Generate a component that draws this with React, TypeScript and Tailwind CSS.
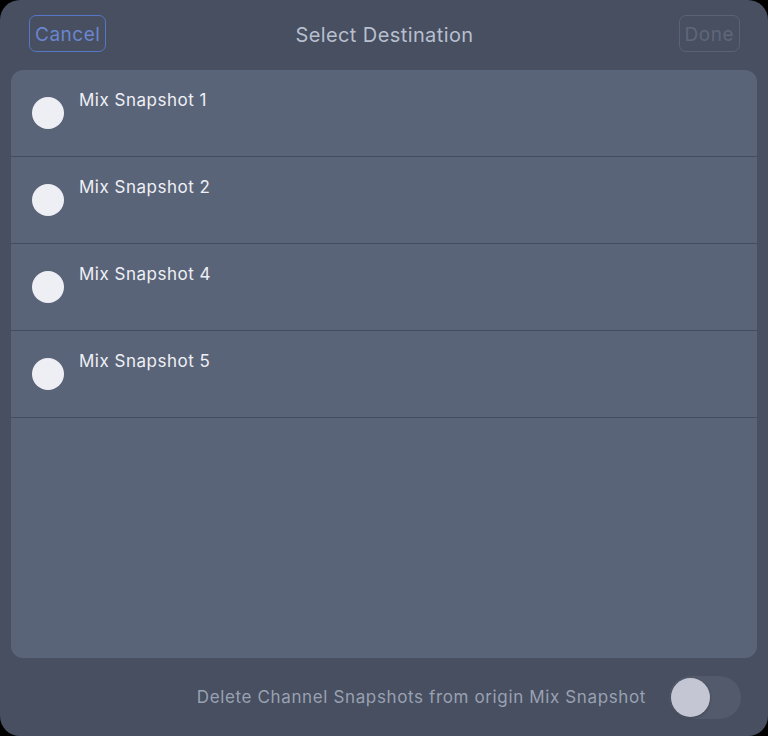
import React from "react";

const items = ["Mix Snapshot 1", "Mix Snapshot 2", "Mix Snapshot 4", "Mix Snapshot 5"];

export default function App() {
  return (
    <div
      className="w-[768px] h-[736px] bg-black"
      style={{ fontFamily: "Inter, 'Noto Sans', 'Liberation Sans', sans-serif" }}
    >
      <div className="w-full h-full rounded-[20px] bg-[#474f60] flex flex-col">
        <div className="h-[70px] grid grid-cols-[1fr_auto_1fr] items-start pt-[15px] pl-[29px] pr-[28px]">
          <div className="flex justify-start">
            <button className="h-[37px] px-[5px] pt-[2px] rounded-[7px] border border-[#5676c9] text-[19px] tracking-[0.5px] leading-none text-[#6a86cf]">
              Cancel
            </button>
          </div>
          <div className="h-[37px] pt-[2px] flex items-center text-[20px] tracking-[0.4px] text-[#b8bfcf]">
            Select Destination
          </div>
          <div className="flex justify-end">
            <button className="h-[37px] px-[5px] pt-[2px] rounded-[7px] border border-[#5a6275] text-[19px] tracking-[0.5px] leading-none text-[#5f6779]">
              Done
            </button>
          </div>
        </div>
        <div className="mx-[11px] h-[588px] rounded-[12px] bg-[#5a6479] flex flex-col overflow-hidden">
          {items.map((label) => (
            <div key={label} className="h-[87px] shrink-0 border-b border-[#454c5d] flex items-center">
              <div className="ml-[21px] w-8 h-8 rounded-full bg-[#eeeff4] shrink-0" />
              <div className="ml-[15px] self-start pt-[20px] text-[17px] tracking-[0.5px] leading-5 text-[#eef0f5]">
                {label}
              </div>
            </div>
          ))}
        </div>
        <div className="flex-1 flex items-center justify-end pr-[27px]">
          <span className="pt-[2px] text-[17px] tracking-[0.63px] text-[#9aa1b2]">
            Delete Channel Snapshots from origin Mix Snapshot
          </span>
          <div className="ml-[23px] w-[72px] h-[43px] rounded-full bg-[#535a6b] flex items-center pl-[2px]">
            <div className="w-[39px] h-[39px] rounded-full bg-[#c4c7d3] shadow-[0_1px_3px_rgba(0,0,0,0.25)]" />
          </div>
        </div>
      </div>
    </div>
  );
}
